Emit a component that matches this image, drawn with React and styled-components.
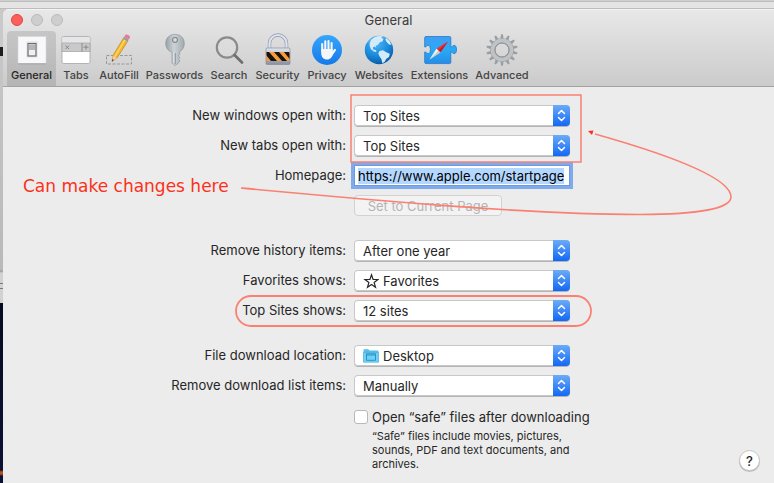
import React, { useEffect, useRef, useState } from "react";
import styled, { createGlobalStyle } from "styled-components";

const GlobalStyle = createGlobalStyle`
  * {
    box-sizing: border-box;
  }
  body {
    margin: 0;
    font-family: Inter, "Liberation Sans", sans-serif;
    font-size: 13px;
    line-height: 16px;
    color: #262626;
  }
  button, input, select {
    margin: 0;
    font: inherit;
    color: inherit;
  }
`;

const Desktop = styled.div`
  display: flex;
  flex-direction: column;
  min-height: 100vh;
  padding: 9px 0 0 3px;
  background:
    linear-gradient(#cfcfcf 1px, #bdbdbd 1px 2px, #e4e4e4 2px 8px, #bcbcbc 8px 9px, transparent 9px),
    linear-gradient(
      #c9c9c9 47px,
      #1e1e1e 47px 56px,
      #c6c6c6 56px,
      #b9b9b9 270px,
      #999 271px,
      #d2d2d2 273px 283px,
      #777 283px 284px,
      #d2d2d2 284px 288px,
      #777 288px 289px,
      #d2d2d2 289px 303px,
      #040c22 303px,
      #0b1233 470px,
      #b4521c 472px 474px,
      #0b1233 476px
    );
`;

const Window = styled.main`
  flex: 1;
  display: flex;
  flex-direction: column;
  border-radius: 6px 0 0 0;
  background: #ececec;
  overflow: hidden;
`;

const Header = styled.header`
  border-bottom: 1px solid #a3a3a3;
  background: linear-gradient(#e8e8e8, #cbcbcb);
  box-shadow: inset 0 1px 0 #f4f4f4;
`;

const TitleBar = styled.div`
  display: grid;
  grid-template-columns: 1fr auto 1fr;
  align-items: center;
  height: 22px;
  padding: 0 8px;
`;

const Lights = styled.div`
  display: flex;
  gap: 8px;
`;

const Light = styled.button`
  width: 12px;
  height: 12px;
  padding: 0;
  border: 1px solid ${(props) => (props.$close ? "#e2463f" : "#bababa")};
  border-radius: 50%;
  background: ${(props) => (props.$close ? "#fc605c" : "#cecece")};
`;

const Title = styled.h1`
  margin: 0;
  font-size: 13px;
  font-weight: 400;
  color: #3c3c3c;
`;

const Toolbar = styled.nav`
  display: flex;
  padding-left: 4px;
`;

const ToolButton = styled.button`
  flex: none;
  display: flex;
  flex-direction: column;
  align-items: center;
  gap: 2px;
  width: ${(props) => props.$width}px;
  height: 55px;
  padding: 3px 0;
  border: 0;
  border-radius: 4px 4px 0 0;
  background: ${(props) => (props.$active ? "linear-gradient(#c6c6c6, #b5b5b5)" : "none")};
  color: ${(props) => (props.$active ? "#262626" : "#444")};
  font-size: 11px;
  font-weight: 500;
  line-height: 14px;
  white-space: nowrap;

  svg {
    display: block;
    width: 32px;
    height: 32px;
    overflow: visible;
  }
`;

const Content = styled.section`
  flex: 1;
  display: grid;
  grid-template-columns: 1fr auto 1fr;
  padding: 18px 14px 12px;
`;

const Form = styled.form`
  grid-column: 2;
  position: relative;
  display: flex;
  flex-direction: column;
  gap: 24px;
`;

const Group = styled.div`
  display: grid;
  grid-template-columns: 172px 249px;
  column-gap: 8px;
  row-gap: 9px;
  align-items: center;
`;

const Label = styled.label`
  justify-self: end;
  line-height: 21px;
  white-space: nowrap;
`;

const SelectBox = styled.div`
  display: grid;
  align-items: center;
  width: 216px;
  height: 21px;
  border-radius: 4px;
  background: #fff;
  box-shadow: inset 0 0 0 1px #c8c8c8, 0 1px 0 #b4b4b4;
  overflow: hidden;

  > * {
    grid-area: 1 / 1;
  }
  > svg {
    margin-left: 9px;
    pointer-events: none;
  }
`;

const Select = styled.select`
  width: 100%;
  height: 21px;
  padding: 0 24px 0 ${(props) => (props.$icon ? "29px" : "9px")};
  border: 0;
  outline: 0;
  background: none;
  appearance: none;
`;

const Arrows = styled.span`
  display: grid;
  place-items: center;
  justify-self: end;
  width: 17px;
  height: 21px;
  background: linear-gradient(#6cabf7, #1268f5);
  pointer-events: none;
`;

const TextInput = styled.input`
  width: 216px;
  height: 21px;
  padding: 0 3px;
  border: 1px solid #6a9be2;
  outline: 3px solid #7faaeb;
  border-radius: 0;
  background: #fff;
  color: #000;

  &::selection {
    background: #b3d7ff;
    color: #000;
  }
`;

const PageButton = styled.button`
  grid-column: 2;
  justify-self: start;
  width: 148px;
  height: 21px;
  padding: 0;
  border: 1px solid #d2d2d2;
  border-radius: 4px;
  background: #f3f3f3;
  color: #b4b4b4;
`;

const CheckRow = styled.div`
  grid-column: 2;
  display: grid;
  grid-template-columns: 14px 1fr;
  column-gap: 4px;
  row-gap: 4px;
  align-items: center;
  padding-top: 4px;
`;

const Checkbox = styled.input`
  width: 14px;
  height: 14px;
  border: 1px solid #b9b9b9;
  border-radius: 3px;
  background: #fff;
  appearance: none;

  &:checked {
    background: #1268f5;
  }
`;

const CheckLabel = styled.label`
  line-height: 16px;
  white-space: nowrap;
`;

const Hint = styled.p`
  grid-column: 2;
  width: 208px;
  margin: 0;
  font-size: 11px;
  line-height: 14px;
`;

const HelpButton = styled.button`
  grid-column: 3;
  align-self: end;
  justify-self: end;
  width: 21px;
  height: 21px;
  padding: 0;
  border: 1px solid #c4c4c4;
  border-radius: 50%;
  background: #fff;
  box-shadow: 0 1px 0 #bbb;
  font-weight: 500;
`;

const Marks = styled.svg`
  position: absolute;
  top: 0;
  left: 0;
  overflow: visible;
  pointer-events: none;
`;

const Note = styled.p`
  position: absolute;
  top: 71px;
  left: -151px;
  margin: 0;
  font-family: "DejaVu Sans", sans-serif;
  font-size: 17px;
  line-height: 20px;
  color: #fb3120;
  white-space: nowrap;
`;

const GeneralIcon = () => (
  <svg viewBox="0 0 32 32">
    <rect x="2" y="2.5" width="28" height="27" fill="#f8f8fa" stroke="#d5d5d8" strokeWidth=".6" />
    <path d="M2 29.8h28" stroke="#999" strokeWidth=".8" />
    <rect x="10" y="7" width="12" height="17" rx="1" fill="#ececee" />
    <rect x="12" y="9.5" width="8" height="12.5" fill="#f0f0f0" stroke="#6a6a6a" strokeWidth="1.2" />
    <rect x="13" y="10.5" width="6" height="5.5" fill="#b5b5b9" />
  </svg>
);

const TabsIcon = () => (
  <svg viewBox="0 0 32 32">
    <rect x="2" y="2.5" width="28" height="27" rx="1.5" fill="#fff" stroke="#a5a5a5" strokeWidth=".8" />
    <path d="M2.4 9V4q0-1.1 1.1-1.1h25q1.1 0 1.1 1.1v5z" fill="#e6e6e8" />
    <path d="M2 9h28v8.5H2z" fill="#c9c9c9" stroke="#a0a0a0" strokeWidth=".7" />
    <path d="M22 9v8.5M5.500 11.5l3.500 3.500m0-3.500L5.500 15M23.500 13.200h5M26 10.700v5" fill="none" stroke="#8a8a8a" />
  </svg>
);

const AutoFillIcon = () => (
  <svg viewBox="0 0 32 32">
    <rect x="3.5" y="21.5" width="25" height="8.5" fill="none" stroke="#999" strokeDasharray="3 1.5" />
    <path d="M9 27.500l1-6L20.500 4l4.500 2.700L14 24z" fill="#f7b52c" stroke="#b9781d" strokeWidth=".6" />
    <path d="M12 22.300L22.400 5.200" stroke="#ffdd6d" strokeWidth="1.3" />
    <path d="M9 27.500l1-6 4 2.500z" fill="#efcf9f" />
    <path d="M9 27.500l.4-2.500 1.400.9z" fill="#333" />
    <path d="M20 4.800l1.200-2 4.500 2.700-1.200 2z" fill="#8fa0ad" />
    <path d="M21.200 2.800L22.300 1q1-1.200 3.300.2t1.300 2.500l-1.200 1.800z" fill="#e7799b" />
  </svg>
);

const PasswordsIcon = () => (
  <svg viewBox="0 0 32 32">
    <defs>
      <linearGradient id="key" x2="1">
        <stop stopColor="#98a2a6" />
        <stop offset=".45" stopColor="#ccd3d6" />
        <stop offset="1" stopColor="#a0aaae" />
      </linearGradient>
    </defs>
    <path
      fillRule="evenodd"
      fill="url(#key)"
      stroke="#858f93"
      strokeWidth=".6"
      d="M16 .4c6 0 9.300 4 9.300 9 0 4-2 6.800-4.600 8.300v2.800l-1.500 1.500 1.800 1.600-1.500 1.600 1.300 1.700-1.300 2L16 31.600 13 29V18.200C9 17 6.700 13.500 6.700 9.400 6.700 4.400 10 .4 16 .4zM16 3.700a2.200 2.200 0 1 0 0 4.400 2.200 2.200 0 0 0 0-4.400z"
    />
    <circle cx="16" cy="5.9" r="2.7" fill="none" stroke="#778185" strokeWidth=".8" />
    <path d="M16.300 19v11" stroke="#7d878b" strokeWidth=".8" />
    <path d="M14.600 18v11" stroke="#dce1e3" />
  </svg>
);

const SearchIcon = () => (
  <svg viewBox="0 0 32 32">
    <circle cx="14" cy="13.5" r="10.2" fill="#ddd" fillOpacity=".5" stroke="#8b8b8b" strokeWidth="2.2" />
    <path d="M21.500 21l7.500 7.500" stroke="#707070" strokeWidth="2.800" strokeLinecap="round" />
  </svg>
);

const SecurityIcon = () => (
  <svg viewBox="0 0 32 32">
    <defs>
      <linearGradient id="steel" x2="0" y2="1">
        <stop stopColor="#dfe3ec" />
        <stop offset="1" stopColor="#8790a2" />
      </linearGradient>
      <clipPath id="band">
        <path d="M4.500 18h23v9h-23z" />
      </clipPath>
    </defs>
    <path d="M7.500 15V9.500a8.500 8.500 0 0 1 17 0V15" fill="none" stroke="#8f97aa" strokeWidth="3.400" />
    <path d="M7.500 15V9.500a8.500 8.500 0 0 1 17 0V15" fill="none" stroke="#dde3ee" strokeWidth="2.200" />
    <rect x="4" y="14" width="24" height="16.5" rx="1.2" fill="url(#steel)" stroke="#7d8596" strokeWidth=".6" />
    <path d="M4.500 18h23v9h-23z" fill="#f89b3a" />
    <g clipPath="url(#band)" fill="#171310">
      <path d="M4 18h3l8 9H9l-5-6zM12 18h5l8 9h-5zM22 18h5l6 7v3h-3z" />
    </g>
  </svg>
);

const PrivacyIcon = () => (
  <svg viewBox="0 0 32 32">
    <defs>
      <linearGradient id="privacy" x2="0" y2="1">
        <stop stopColor="#36a6fb" />
        <stop offset="1" stopColor="#1479ea" />
      </linearGradient>
    </defs>
    <circle cx="16" cy="16" r="15" fill="url(#privacy)" />
    <g stroke="#f4f6f8" strokeLinecap="round" fill="none">
      <path d="M11.200 17V10M14.300 16V7.300M17.500 16V7M20.600 17V9" strokeWidth="2.100" />
      <path d="M21 20l2.900-4" strokeWidth="2.200" />
    </g>
    <path d="M10.200 15h11.400v4.300l.6.7c-1.200 3-2.800 5.500-6 5.500-4 0-6-2.700-6-6.500z" fill="#f4f6f8" />
  </svg>
);

const WebsitesIcon = () => (
  <svg viewBox="0 0 32 32">
    <defs>
      <radialGradient id="globe" cx=".4" cy=".25" r=".8">
        <stop stopColor="#4bb8f8" />
        <stop offset=".6" stopColor="#1887d9" />
        <stop offset="1" stopColor="#0a559f" />
      </radialGradient>
    </defs>
    <circle cx="16" cy="16" r="14.2" fill="url(#globe)" />
    <path
      fill="#d3eaf8"
      d="M8 6q4-4 9-4l3 .4-2 1.600 2.500.8-1 2.700-2.300.5-2.700 3.200-1.800.3.500 2.200-1.600-1.300-1.800 1.200.7 2.200 2.500.3.400 2-2.600-.5-3-2.600-1.300-4L7 8.500zM23 4l3.500 3 2 4-2.500-.5-2-2-1.500-2.500zM16.500 17l3.500-.7 3.200 2 3.600 1.500-.8 3.300-2.700 1.700-1.600 3-2.400 1.500-.8-4-2.200-3.400-1-2.400z"
    />
    <path d="M5 9a13 13 0 0 1 22 0" fill="none" stroke="#fff" strokeOpacity=".15" strokeWidth="3" />
  </svg>
);

const ExtensionsIcon = () => (
  <svg viewBox="0 0 32 32">
    <defs>
      <linearGradient id="puzzle" x2="0" y2="1">
        <stop stopColor="#429df5" />
        <stop offset=".5" stopColor="#28aaf5" />
        <stop offset="1" stopColor="#268de9" />
      </linearGradient>
    </defs>
    <path
      fill="url(#puzzle)"
      stroke="#2377c7"
      strokeWidth=".8"
      d="M2 2.500h23.500q1.300 0 1.300 1.300V13c2 .3 1.700-1.700 3.400-1.700 1.400 0 2.300 1.800 2.300 4.200s-.9 4.200-2.300 4.200c-1.700 0-1.400-2-3.400-1.700v10.300q0 1.300-1.300 1.300H2Q.7 29.600.7 28.300V18c2-.3 1.700 1.700 3.400 1.700 1.400 0 2.300-1.800 2.300-4.200s-.9-4.200-2.300-4.200C2.400 11.300 2.700 13.300.7 13V3.800Q.7 2.500 2 2.500z"
    />
    <path d="M5.500 25.500l7-11 4 3.800z" fill="#f5f5f5" />
    <path d="M12.500 14.500L24 7.500l-7.500 10.800z" fill="#f03237" />
    <path d="M5.500 25.500l11-7.200-2-1.900z" fill="#c6ccd2" />
    <path d="M24 7.500l-7.500 10.800-2-1.900z" fill="#c51a26" />
  </svg>
);

const AdvancedIcon = () => (
  <svg viewBox="0 0 32 32">
    <g fill="#9b9fa2">
      {Array.from({ length: 14 }, (_, i) => (
        <path key={i} d="M14.300 5l.8-4.700h1.800l.8 4.700z" transform={`rotate(${(i * 360) / 14} 16 16)`} />
      ))}
    </g>
    <circle cx="16" cy="16" r="9.3" fill="none" stroke="#989c9f" strokeWidth="5" />
    <circle cx="16" cy="16" r="9.5" fill="none" stroke="#bfc3c6" strokeWidth="3.800" />
    <circle cx="16" cy="16" r="7" fill="none" stroke="#8e9396" strokeWidth="1" />
  </svg>
);

const StarIcon = () => (
  <svg width="16" height="16" viewBox="0 0 16 16">
    <path
      d="M8.500 1.800l1.600 4.700H15l-3.900 3 1.400 4.700-4-2.800-4 2.800 1.400-4.700-3.900-3h4.900z"
      fill="none"
      stroke="#262626"
      strokeWidth="1.2"
    />
  </svg>
);

const FolderIcon = () => (
  <svg width="16" height="16" viewBox="0 0 16 16">
    <path d="M.5 3V2q0-.8.8-.8h4l1.200 1.300h8.200q.8 0 .8.800V14H.5z" fill="#56bde8" />
    <path d="M.5 4.500h15v9.800H.5z" fill="#6fd0f6" stroke="#48afd9" strokeWidth=".6" />
    <path d="M3.500 5.800h9v6.500h-9zM3.500 7h9" fill="none" stroke="#2b93c6" />
  </svg>
);

const tools = [
  { name: "General", width: 49, Icon: GeneralIcon },
  { name: "Tabs", width: 40, Icon: TabsIcon },
  { name: "AutoFill", width: 46, Icon: AutoFillIcon },
  { name: "Passwords", width: 65, Icon: PasswordsIcon },
  { name: "Search", width: 44, Icon: SearchIcon },
  { name: "Security", width: 53, Icon: SecurityIcon },
  { name: "Privacy", width: 46, Icon: PrivacyIcon },
  { name: "Websites", width: 58, Icon: WebsitesIcon },
  { name: "Extensions", width: 63, Icon: ExtensionsIcon },
  { name: "Advanced", width: 62, Icon: AdvancedIcon },
];

const SelectRow = ({ id, label, value, icon }) => (
  <>
    <Label htmlFor={id}>{label}</Label>
    <SelectBox>
      <Select id={id} $icon={Boolean(icon)}>
        <option>{value}</option>
      </Select>
      {icon}
      <Arrows>
        <svg width="9" height="13" viewBox="0 0 9 13" fill="none" stroke="#fff" strokeWidth="1.5">
          <path d="M1.500 4.500l3-3 3 3M1.500 8.500l3 3 3-3" strokeLinecap="round" strokeLinejoin="round" />
        </svg>
      </Arrows>
    </SelectBox>
  </>
);

const App = () => {
  const [active, setActive] = useState("General");
  const [homepage, setHomepage] = useState("https://www.apple.com/startpage");
  const homepageRef = useRef(null);

  useEffect(() => {
    homepageRef.current.focus();
    homepageRef.current.select();
  }, []);

  return (
    <Desktop>
      <GlobalStyle />
      <Window>
        <Header>
          <TitleBar>
            <Lights>
              <Light $close aria-label="Close" />
              <Light aria-label="Minimize" />
              <Light aria-label="Zoom" />
            </Lights>
            <Title>General</Title>
          </TitleBar>
          <Toolbar>
            {tools.map(({ name, width, Icon }) => (
              <ToolButton
                key={name}
                $width={width}
                $active={active === name}
                onClick={() => setActive(name)}
              >
                <Icon />
                {name}
              </ToolButton>
            ))}
          </Toolbar>
        </Header>
        <Content>
          <Form onSubmit={(e) => e.preventDefault()}>
            <Group>
              <SelectRow id="windows" label="New windows open with:" value="Top Sites" />
              <SelectRow id="tabs" label="New tabs open with:" value="Top Sites" />
              <Label htmlFor="homepage">Homepage:</Label>
              <TextInput
                id="homepage"
                type="text"
                ref={homepageRef}
                value={homepage}
                onChange={(e) => setHomepage(e.target.value)}
              />
              <PageButton type="button" disabled>
                Set to Current Page
              </PageButton>
            </Group>
            <Group>
              <SelectRow id="history" label="Remove history items:" value="After one year" />
              <SelectRow id="favorites" label="Favorites shows:" value="Favorites" icon={<StarIcon />} />
              <SelectRow id="topsites" label="Top Sites shows:" value="12 sites" />
            </Group>
            <Group>
              <SelectRow id="location" label="File download location:" value="Desktop" icon={<FolderIcon />} />
              <SelectRow id="downloads" label="Remove download list items:" value="Manually" />
              <CheckRow>
                <Checkbox id="safe" type="checkbox" />
                <CheckLabel htmlFor="safe">Open “safe” files after downloading</CheckLabel>
                <Hint>“Safe” files include movies, pictures, sounds, PDF and text documents, and archives.</Hint>
              </CheckRow>
            </Group>
            {/* red mark-up drawn over the form */}
            <Marks width="429" height="370" fill="none" stroke="#fa8072" strokeWidth="1.8">
              <rect x="177" y="-10" width="230" height="67" strokeWidth="1.5" />
              <rect x="62" y="191" width="355" height="30" rx="15" />
              <path d="M67 83C196 95 346 109 466 109.500C526 109.500 557 103 557 92C557 75 506 53 421 29" strokeWidth="1.6" />
              <path d="M414 26l5.500-.5-1.500 4.500z" fill="#fb3120" stroke="none" />
            </Marks>
            <Note>Can make changes here</Note>
          </Form>
          <HelpButton aria-label="Help">?</HelpButton>
        </Content>
      </Window>
    </Desktop>
  );
};

export default App;
